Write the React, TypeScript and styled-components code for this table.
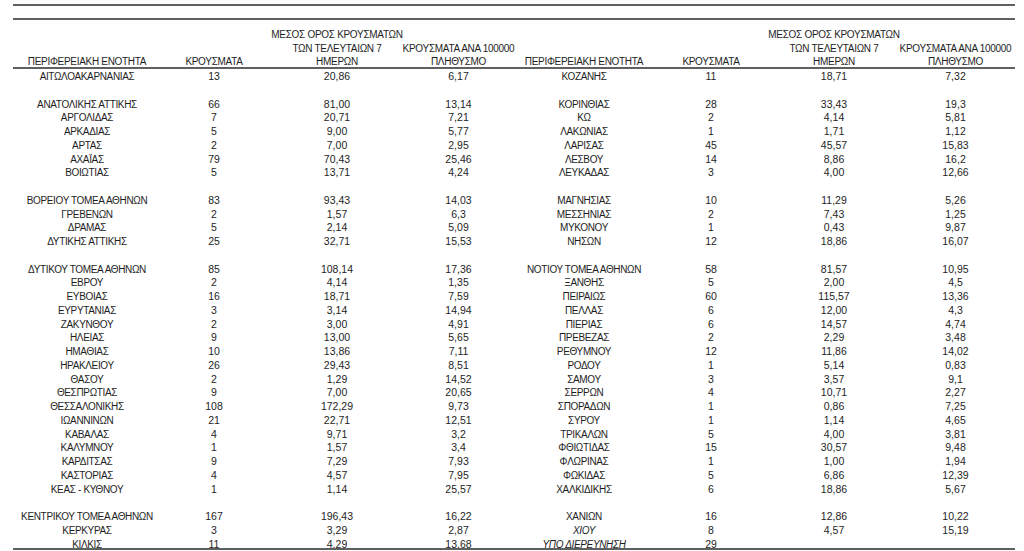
import React from 'react';
import styled, {createGlobalStyle} from 'styled-components';

type Entry = [string, string, string, string, boolean?] | null;

const left: Entry[] = [
    ['ΑΙΤΩΛΟΑΚΑΡΝΑΝΙΑΣ', '13', '20,86', '6,17'],
    null,
    ['ΑΝΑΤΟΛΙΚΗΣ ΑΤΤΙΚΗΣ', '66', '81,00', '13,14'],
    ['ΑΡΓΟΛΙΔΑΣ', '7', '20,71', '7,21'],
    ['ΑΡΚΑΔΙΑΣ', '5', '9,00', '5,77'],
    ['ΑΡΤΑΣ', '2', '7,00', '2,95'],
    ['ΑΧΑΪΑΣ', '79', '70,43', '25,46'],
    ['ΒΟΙΩΤΙΑΣ', '5', '13,71', '4,24'],
    null,
    ['ΒΟΡΕΙΟΥ ΤΟΜΕΑ ΑΘΗΝΩΝ', '83', '93,43', '14,03'],
    ['ΓΡΕΒΕΝΩΝ', '2', '1,57', '6,3'],
    ['ΔΡΑΜΑΣ', '5', '2,14', '5,09'],
    ['ΔΥΤΙΚΗΣ ΑΤΤΙΚΗΣ', '25', '32,71', '15,53'],
    null,
    ['ΔΥΤΙΚΟΥ ΤΟΜΕΑ ΑΘΗΝΩΝ', '85', '108,14', '17,36'],
    ['ΕΒΡΟΥ', '2', '4,14', '1,35'],
    ['ΕΥΒΟΙΑΣ', '16', '18,71', '7,59'],
    ['ΕΥΡΥΤΑΝΙΑΣ', '3', '3,14', '14,94'],
    ['ΖΑΚΥΝΘΟΥ', '2', '3,00', '4,91'],
    ['ΗΛΕΙΑΣ', '9', '13,00', '5,65'],
    ['ΗΜΑΘΙΑΣ', '10', '13,86', '7,11'],
    ['ΗΡΑΚΛΕΙΟΥ', '26', '29,43', '8,51'],
    ['ΘΑΣΟΥ', '2', '1,29', '14,52'],
    ['ΘΕΣΠΡΩΤΙΑΣ', '9', '7,00', '20,65'],
    ['ΘΕΣΣΑΛΟΝΙΚΗΣ', '108', '172,29', '9,73'],
    ['ΙΩΑΝΝΙΝΩΝ', '21', '22,71', '12,51'],
    ['ΚΑΒΑΛΑΣ', '4', '9,71', '3,2'],
    ['ΚΑΛΥΜΝΟΥ', '1', '1,57', '3,4'],
    ['ΚΑΡΔΙΤΣΑΣ', '9', '7,29', '7,93'],
    ['ΚΑΣΤΟΡΙΑΣ', '4', '4,57', '7,95'],
    ['ΚΕΑΣ - ΚΥΘΝΟΥ', '1', '1,14', '25,57'],
    null,
    ['ΚΕΝΤΡΙΚΟΥ ΤΟΜΕΑ ΑΘΗΝΩΝ', '167', '196,43', '16,22'],
    ['ΚΕΡΚΥΡΑΣ', '3', '3,29', '2,87'],
    ['ΚΙΛΚΙΣ', '11', '4,29', '13,68'],
];

const right: Entry[] = [
    ['ΚΟΖΑΝΗΣ', '11', '18,71', '7,32'],
    null,
    ['ΚΟΡΙΝΘΙΑΣ', '28', '33,43', '19,3'],
    ['ΚΩ', '2', '4,14', '5,81'],
    ['ΛΑΚΩΝΙΑΣ', '1', '1,71', '1,12'],
    ['ΛΑΡΙΣΑΣ', '45', '45,57', '15,83'],
    ['ΛΕΣΒΟΥ', '14', '8,86', '16,2'],
    ['ΛΕΥΚΑΔΑΣ', '3', '4,00', '12,66'],
    null,
    ['ΜΑΓΝΗΣΙΑΣ', '10', '11,29', '5,26'],
    ['ΜΕΣΣΗΝΙΑΣ', '2', '7,43', '1,25'],
    ['ΜΥΚΟΝΟΥ', '1', '0,43', '9,87'],
    ['ΝΗΣΩΝ', '12', '18,86', '16,07'],
    null,
    ['ΝΟΤΙΟΥ ΤΟΜΕΑ ΑΘΗΝΩΝ', '58', '81,57', '10,95'],
    ['ΞΑΝΘΗΣ', '5', '2,00', '4,5'],
    ['ΠΕΙΡΑΙΩΣ', '60', '115,57', '13,36'],
    ['ΠΕΛΛΑΣ', '6', '12,00', '4,3'],
    ['ΠΙΕΡΙΑΣ', '6', '14,57', '4,74'],
    ['ΠΡΕΒΕΖΑΣ', '2', '2,29', '3,48'],
    ['ΡΕΘΥΜΝΟΥ', '12', '11,86', '14,02'],
    ['ΡΟΔΟΥ', '1', '5,14', '0,83'],
    ['ΣΑΜΟΥ', '3', '3,57', '9,1'],
    ['ΣΕΡΡΩΝ', '4', '10,71', '2,27'],
    ['ΣΠΟΡΑΔΩΝ', '1', '0,86', '7,25'],
    ['ΣΥΡΟΥ', '1', '1,14', '4,65'],
    ['ΤΡΙΚΑΛΩΝ', '5', '4,00', '3,81'],
    ['ΦΘΙΩΤΙΔΑΣ', '15', '30,57', '9,48'],
    ['ΦΛΩΡΙΝΑΣ', '1', '1,00', '1,94'],
    ['ΦΩΚΙΔΑΣ', '5', '6,86', '12,39'],
    ['ΧΑΛΚΙΔΙΚΗΣ', '6', '18,86', '5,67'],
    null,
    ['ΧΑΝΙΩΝ', '16', '12,86', '10,22'],
    ['ΧΙΟΥ', '8', '4,57', '15,19', true],
    ['ΥΠΟ ΔΙΕΡΕΥΝΗΣΗ', '29', '', '', true],
];

const Header = () => (
    <>
        <HeadCell><HeadLine>ΠΕΡΙΦΕΡΕΙΑΚΗ ΕΝΟΤΗΤΑ</HeadLine></HeadCell>
        <HeadCell><HeadLine>ΚΡΟΥΣΜΑΤΑ</HeadLine></HeadCell>
        <HeadCell>
            <HeadLine>ΜΕΣΟΣ ΟΡΟΣ ΚΡΟΥΣΜΑΤΩΝ</HeadLine>
            <HeadLine>ΤΩΝ ΤΕΛΕΥΤΑΙΩΝ 7</HeadLine>
            <HeadLine>ΗΜΕΡΩΝ</HeadLine>
        </HeadCell>
        <HeadCell>
            <HeadLine>ΚΡΟΥΣΜΑΤΑ ΑΝΑ 100000</HeadLine>
            <HeadLine>ΠΛΗΘΥΣΜΟ</HeadLine>
        </HeadCell>
    </>
);

const Half = ({entry}: {entry: Entry}) => {
    if (!entry) {
        return <><NameCell/><NumCell/><NumCell/><NumCell/></>;
    }
    const [name, cases, mean, rate, italic] = entry;
    return (
        <>
            <NameCell $italic={!!italic}>{name}</NameCell>
            <NumCell>{cases}</NumCell>
            <NumCell>{mean}</NumCell>
            <NumCell>{rate}</NumCell>
        </>
    );
};

export default function App() {
    return (
        <>
            <GlobalStyle/>
            <Page>
                <Rule/>
                <Rule $gap={12}/>
                <HeadRow>
                    <Header/>
                    <Header/>
                </HeadRow>
                <Rule $gap={-1.75}/>
                <Body>
                    {left.map((entry, i) => (
                        <Row key={i}>
                            <Half entry={entry}/>
                            <Half entry={right[i]}/>
                        </Row>
                    ))}
                </Body>
                <Rule $gap={-3.7}/>
            </Page>
        </>
    );
}

const GlobalStyle = createGlobalStyle`
  html, body {
    margin: 0;
    padding: 0;
    background: #fff;
    overflow: hidden;
  }
  body {
    font-family: "Liberation Sans", Arial, sans-serif;
    color: #1e1e1e;
  }
`

const columns = '148px 106px 140px 103px 148px 106px 140px 103px 8px';

const Page = styled.div`
  width: 1002px;
  padding: 4px 0 0 13px;
`

const Rule = styled.div<{ $gap?: number }>`
  height: 2px;
  background: #606060;
  margin-top: ${p => p.$gap ?? 0}px;
  position: relative;
`

const HeadRow = styled.div`
  display: grid;
  grid-template-columns: ${columns};
  align-items: end;
  min-height: 48.75px;
  font-size: 10px;
  letter-spacing: -0.3px;
  line-height: 13.5px;
`

const HeadCell = styled.div`
  display: flex;
  flex-direction: column;
  align-items: center;
  min-width: 0;
`

const HeadLine = styled.span`
  display: block;
  white-space: nowrap;
  text-align: center;
  margin: 0 -40px;
`

const Body = styled.div`
  padding-top: 1.1px;
`

const Row = styled.div`
  display: grid;
  grid-template-columns: ${columns};
  height: 13.76px;
  line-height: 13.76px;
`

const NameCell = styled.div<{ $italic?: boolean }>`
  text-align: center;
  white-space: nowrap;
  font-size: 10px;
  letter-spacing: -0.35px;
  font-style: ${p => (p.$italic ? 'italic' : 'normal')};
`

const NumCell = styled.div`
  text-align: center;
  white-space: nowrap;
  font-size: 10.5px;
`
